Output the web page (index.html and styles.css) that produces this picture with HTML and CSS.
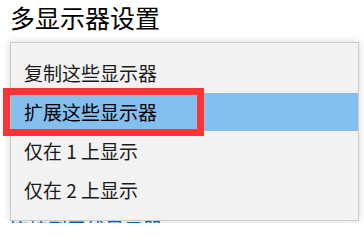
FILE: index.html
```html
<!DOCTYPE html>
<html lang="zh-CN">
<head>
<meta charset="utf-8">
<title>多显示器设置</title>
<link rel="stylesheet" href="styles.css">
</head>
<body>
<main class="page">
  <h1 class="title">多显示器设置</h1>
  <div class="combo"></div>
  <a class="link" href="#">连接到无线显示器</a>

  <ul class="menu">
    <li class="item">复制这些显示器</li>
    <li class="item selected">扩展这些显示器</li>
    <li class="item">仅在 1 上显示</li>
    <li class="item">仅在 2 上显示</li>
  </ul>
  <div class="annotation"></div>
</main>
</body>
</html>
```

FILE: styles.css
```css
* { box-sizing: border-box; }
html, body {
  margin: 0;
  padding: 0;
  background: #ffffff;
  overflow: hidden;
  height: 223px;
}
body {
  font-family: "Noto Sans CJK SC", "Noto Sans", sans-serif;
  color: #000;
}
.page {
  position: relative;
  width: 364px;
  height: 223px;
  overflow: hidden;
  padding: 0 0 0 10px;
  display: flex;
  flex-direction: column;
  align-items: flex-start;
}
.title {
  flex-shrink: 0;
  margin: 0;
  font-size: 25px;
  font-weight: 400;
  line-height: 34px;
  color: #000;
}
.combo {
  flex-shrink: 0;
  margin-top: 8px;
  width: 349px;
  height: 40px;
}
.link {
  flex-shrink: 0;
  margin-top: 134px;
  font-size: 19px;
  line-height: 26px;
  color: #0067c0;
  text-decoration: none;
}
.menu {
  position: absolute;
  left: 10px;
  top: 42px;
  width: 349px;
  height: 179px;
  margin: 0;
  padding: 10px 0 0 0;
  list-style: none;
  background: #f2f2f2;
  border: 1px solid #cbcbcb;
  box-shadow: 0 0 8px rgba(0, 0, 0, 0.16);
}
.item {
  height: 38px;
  margin: 1px 0;
  padding-left: 13px;
  font-size: 19px;
  line-height: 38px;
  color: #1a1a1a;
  white-space: nowrap;
}
.item.selected {
  background: #84bfee;
  color: #000;
}
.annotation {
  position: absolute;
  left: 3px;
  top: 88px;
  width: 201px;
  height: 48px;
  border: 7px solid #fe3437;
}
```
